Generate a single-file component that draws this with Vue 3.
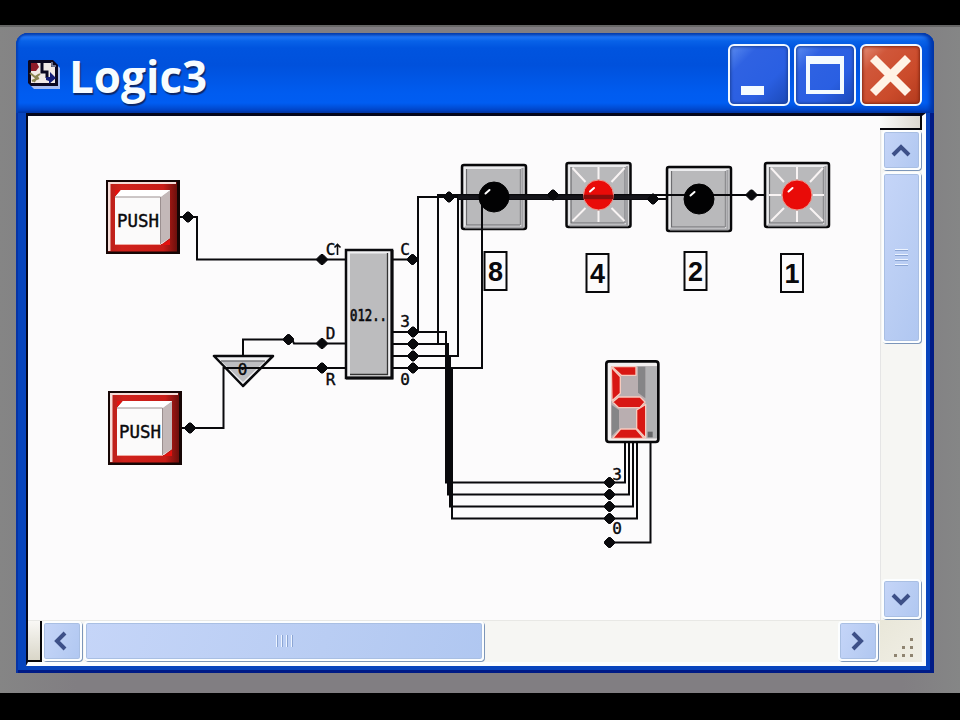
<template>
  <div class="screen">
    <div class="window">
      <header class="title-bar">
        <svg class="app-icon" viewBox="0 0 33 30">
          <path d="M3 2H26L32 8V29H6L3 26Z" fill="#a9bdf0" />
          <path d="M1 0H25L30 5V26H3L0 23V1Z" fill="#0b0720" />
          <path d="M3 3H23V7H27V23H3Z" fill="#f1e9e6" />
          <path d="M3 3H9L11 7L8 11H3Z" fill="#8d1c28" />
          <path d="M2 13L7 17L12 14M4 21L11 18M6 22L10 15" stroke="#8a8450" stroke-width="2" fill="none" />
          <path d="M14 3V12H19V18" stroke="#0b0720" stroke-width="3" fill="none" />
          <path d="M18 20L18 17L22 17L22 12L28 18L21 24V21Z" fill="#141c78" />
          <path d="M24 2V6H28" stroke="#8d93a8" stroke-width="1.5" fill="none" />
        </svg>
        <h1 class="title">Logic3</h1>
        <div class="controls">
          <button class="control">
            <svg viewBox="0 0 62 62"><rect x="13" y="42" width="23" height="9" fill="#f4fbff" /></svg>
          </button>
          <button class="control">
            <svg viewBox="0 0 62 62">
              <path d="M12 12H50V50H12ZM16 20V46H46V20Z" fill="#f4fbff" fill-rule="evenodd" />
            </svg>
          </button>
          <button class="control close">
            <svg viewBox="0 0 62 62">
              <path d="M13 14L48 49M48 14L13 49" stroke="#fff3e6" stroke-width="8.5" />
            </svg>
          </button>
        </div>
      </header>

      <main class="client">
        <svg class="circuit" viewBox="28 116 852 504">
          <defs>
            <linearGradient id="frame" x1="0" y1="0" x2="1" y2="0">
              <stop offset="0" stop-color="#b81f19" />
              <stop offset="0.2" stop-color="#d0221c" />
              <stop offset="0.8" stop-color="#c81c17" />
              <stop offset="1" stop-color="#6d100d" />
            </linearGradient>
          </defs>

          <!-- push buttons -->
          <g v-for="(b, i) in pushButtons" :key="'push' + i" :transform="`translate(${b.x} ${b.y})`">
            <rect width="74" height="74" fill="#160605" />
            <rect x="2" y="2" width="69" height="69.500" fill="url(#frame)" />
            <path d="M2 2H70V4H4.500V71H2Z" fill="#f6dcd8" />
            <path d="M9 17L15 10H64V58L56 64H9Z" fill="#fbfafa" />
            <path d="M54.500 17L64 10V58L54.500 64Z" fill="#c3b8b8" />
            <path d="M9 17L15 10H64L54.500 17Z" fill="#fff" />
            <path d="M9 17H54.500V64" fill="none" stroke="#9b8f8f" stroke-width="1" />
            <path d="M9 64.500H55" stroke="#f0a8a0" stroke-width="1" />
            <path d="M9 10H14L9 16ZM64 59V65H56Z" fill="#e3120f" />
            <text x="11" y="47" class="label" textLength="42" lengthAdjust="spacingAndGlyphs">PUSH</text>
          </g>

          <!-- clock gate -->
          <path d="M214 356H273L243 386Z" fill="#f1f1f3" stroke="#0a0a0d" stroke-width="2.5" stroke-linejoin="round" />
          <path d="M221 361H265L243 382Z" fill="#bdbdc1" />
          <path d="M221 361H265" stroke="#77777b" stroke-width="1.5" />

          <!-- counter chip -->
          <rect x="346" y="250" width="46" height="128" fill="#f0f0f2" stroke="#0a0a0d" stroke-width="2.5" />
          <rect x="350" y="253.500" width="38" height="121" fill="#bcbcbe" />
          <path d="M387.500 253V374.500H350" fill="none" stroke="#333" stroke-width="1.3" />
          <path d="M392 250V378H346" fill="none" stroke="#0a0a0d" stroke-width="3" />

          <!-- lamps -->
          <g v-for="lamp in lamps" :key="lamp.value" :transform="`translate(${lamp.x} ${lamp.y})`">
            <rect x="-32" y="-32" width="64" height="64" rx="2" fill="#d9d9db" stroke="#08080a" stroke-width="2.5" />
            <path d="M-30 -30H30L26 -28H-28V28L-30 30Z" fill="#ececee" />
            <rect x="-27.500" y="-28" width="54" height="56" fill="#b9b9bb" />
            <path d="M-27.500 -28V28H26" fill="none" stroke="#6d6d70" stroke-width="1.200" />
            <path d="M26.500 -28V28" fill="none" stroke="#8d8d90" stroke-width="1.500" />
            <path d="M28.500 -29V30.500H-29" fill="none" stroke="#a2a2a5" stroke-width="2" />
            <path v-if="lamp.on" d="M-26 -27L-13 -13M0 -28V-16M26 -27L13 -13M-28 0H-16M16 0H27M-26 26L-13 13M0 16V27M26 26L13 13" stroke="#f8f3f3" stroke-width="2" />
          </g>

          <!-- seven segment display -->
          <g transform="translate(590 350) scale(0.33333)">
            <rect x="49" y="34" width="156" height="242" rx="8" fill="#f2f0f0" stroke="#08080a" stroke-width="8" />
            <rect x="63" y="49" width="138" height="216" fill="#b9aeb0" />
            <path d="M140 49H201V265H166V60H140Z" fill="#b2b2b4" />
            <path d="M144 50H166V145L144 128Z" fill="#858587" />
            <path d="M65 165L87 180V236L65 258Z" fill="#858587" />
            <rect x="173" y="245" width="15" height="17" fill="#68686a" />
            <g fill="#d81713" stroke="#f8cabe" stroke-width="4" stroke-linejoin="round">
              <path d="M66 50H138V76H94Z" />
              <path d="M64 52L91 80V130L66 152Z" />
              <path d="M68 156L86 141H150L165 156L150 173H86Z" />
              <path d="M167 163V264L140 235V180Z" />
              <path d="M68 265L92 237H138L162 265Z" />
            </g>
          </g>

          <!-- wires -->
          <path v-for="(d, i) in wires" :key="'wire' + i" :d="d" class="wire" />
          <path d="M458 197.200H653" class="bus" />
          <path v-for="([x, y], i) in nodes" :key="'node' + i" :d="`M${x - 1} ${y - 5}H${x + 1}L${x + 5} ${y - 1}V${y + 1}L${x + 1} ${y + 5}H${x - 1}L${x - 5} ${y + 1}V${y - 1}Z`" class="node" />

          <!-- bulbs sit over the wires -->
          <g v-for="lamp in lamps" :key="'bulb' + lamp.value" :transform="`translate(${lamp.x} ${lamp.y})`">
            <circle r="15" :fill="lamp.on ? '#e90b08' : '#020203'" :stroke="lamp.on ? '#ee9a90' : '#020203'" stroke-width="1" />
            <path v-if="lamp.value === 4" d="M-15 2H15" stroke="#8c0d0c" stroke-width="4.500" />
            <path d="M-8.500 -3.500L-4.500 -7" fill="none" stroke="#fff" stroke-width="2" stroke-linecap="round" />
          </g>

          <!-- value boxes -->
          <g v-for="box in valueBoxes" :key="'box' + box.value">
            <rect :x="box.x" :y="box.y" width="22" height="38" fill="#fcfbfc" stroke="#08080a" stroke-width="2" />
            <text :x="box.x + 11" :y="box.y + 29" class="value">{{ box.value }}</text>
          </g>

          <text v-for="(p, i) in pinLabels" :key="'pin' + i" :x="p.x" :y="p.y" class="label pin">{{ p.text }}</text>
          <path d="M337.500 255V245M334.500 247.500L337.500 244.500L340.500 247.500" class="wire rise" />
          <text x="350" y="320.500" class="label chip" textLength="37" lengthAdjust="spacingAndGlyphs">012..</text>
        </svg>

        <div class="scroll-v">
          <div class="gap-top"></div>
          <button class="arrow">
            <svg viewBox="0 0 38 38"><path d="M11 24L19 16L27 24" /></svg>
          </button>
          <div class="thumb thumb-v"><i v-for="n in 4" :key="n"></i></div>
          <div class="track"></div>
          <button class="arrow">
            <svg viewBox="0 0 38 38"><path d="M11 15L19 23L27 15" /></svg>
          </button>
        </div>

        <div class="scroll-h">
          <div class="gap-left"></div>
          <button class="arrow">
            <svg viewBox="0 0 38 38"><path d="M23 11L15 19L23 27" /></svg>
          </button>
          <div class="thumb thumb-h"><i v-for="n in 4" :key="n"></i></div>
          <div class="track"></div>
          <button class="arrow">
            <svg viewBox="0 0 38 38"><path d="M15 11L23 19L15 27" /></svg>
          </button>
        </div>

        <svg class="grip" viewBox="880 620 42 42">
          <rect v-for="([x, y], i) in gripDots" :key="i" :x="x" :y="y" width="3" height="3" />
        </svg>
      </main>
    </div>
  </div>
</template>

<script setup>
const pushButtons = [
  { x: 106, y: 180 },
  { x: 108, y: 391 }
]

const lamps = [
  { value: 8, x: 494, y: 197, on: false },
  { value: 4, x: 598.5, y: 195, on: true },
  { value: 2, x: 699, y: 199, on: false },
  { value: 1, x: 797, y: 195, on: true }
]

const valueBoxes = [
  { value: 8, x: 484.5, y: 252 },
  { value: 4, x: 586.5, y: 254 },
  { value: 2, x: 684.5, y: 252 },
  { value: 1, x: 781, y: 254 }
]

const wires = [
  // inputs
  'M180 217H197V259.500H345',
  'M182 428H223.500V368H345',
  'M243 356V339.500H292L294 343.500H345',
  // counter to lamps
  'M393 259.500H418',
  'M393 332H418V197H462',
  'M393 344H438V195H566',
  'M393 356H458V199H667',
  'M393 368H482V195H765',
  // counter to display
  'M418 332H446V482.500H625V443',
  'M438 344H448V494.500H629V443',
  'M448 356H450V506.500H633V443',
  'M450 368H452V518.500H637V443',
  'M609 542.500H650.500V443'
]

const nodes = [
  [188, 217], [190, 428], [288.5, 339.5],
  [322, 259.5], [322, 343.5], [322, 368],
  [412.5, 259.5], [413, 332], [413, 344], [413, 356], [413, 368],
  [449, 197], [553, 195], [653, 199], [751.5, 195],
  [609.5, 482.5], [609.5, 494.5], [609.5, 506.5], [609.5, 518.5], [609.5, 542.5]
]

const pinLabels = [
  { text: 'C', x: 330.5, y: 255 },
  { text: 'C', x: 405, y: 255 },
  { text: '3', x: 405, y: 327 },
  { text: 'D', x: 330.5, y: 339 },
  { text: 'R', x: 330.5, y: 385 },
  { text: '0', x: 405, y: 385 },
  { text: '0', x: 242.5, y: 375 },
  { text: '3', x: 617, y: 480 },
  { text: '0', x: 617, y: 534 }
]

const gripDots = [
  [910, 638], [902, 646], [910, 646], [894, 654], [902, 654], [910, 654]
]
</script>

<style>
body {
  background: #000;
}
</style>

<style scoped>
.screen {
  box-sizing: border-box;
  width: 960px;
  height: 720px;
  padding: 8px 26px 20px 16px;
  border-top: 25px solid #000;
  border-bottom: 27px solid #000;
  background: linear-gradient(90deg, #858585, #817e82 8%, #817e82 94%, #858686);
  box-shadow: inset 0 2px #666;
}

.window {
  box-sizing: border-box;
  width: 918px;
  height: 640px;
  padding: 0 8px 7px 10px;
  border-radius: 12px 12px 0 0;
  background: #0744bd;
  box-shadow: inset 2px 0 #0733a5, inset -4px 0 #001b86, inset 0 -3px #001b86;
}

.title-bar {
  display: flex;
  box-sizing: border-box;
  height: 80px;
  margin: 0 -8px 0 -10px;
  padding: 11px 12px 0;
  border-radius: 12px 12px 0 0;
  background: linear-gradient(#063eac 0, #1f74f4 4px, #0862e8 8px, #0054df 15px, #0051dc 32px, #005cf0 60px, #005df2 70px, #0043c4 78px, #002f91 80px);
  box-shadow: inset 2px 0 2px #0640b5, inset -4px 0 4px #0134a5;
}

.app-icon {
  width: 33px;
  height: 30px;
  margin-top: 16px;
}

.title {
  margin: -1px 0 0 8px;
  color: #f6fcff;
  font: bold 44px/66px "Open Sans", sans-serif;
  letter-spacing: 0;
  text-shadow: 1px 2px 1px #0b2769;
}

.controls {
  display: flex;
  gap: 4px;
  margin-left: auto;
}

.control {
  box-sizing: border-box;
  width: 62px;
  height: 62px;
  padding: 0;
  border: 2px solid #f1f8ff;
  border-radius: 6px;
  background: linear-gradient(135deg, #5c8df0, #2f62e2 25%, #2a5fe2 65%, #1b49b8);
  box-shadow: inset 0 0 3px 1px #1b429c;
}

.control svg {
  display: block;
  width: 62px;
  height: 62px;
  margin: -2px;
}

.close {
  background: linear-gradient(135deg, #e38e77, #d0573a 25%, #cb4b2b 65%, #b23a1d);
  box-shadow: inset 0 0 3px 1px #842712;
}

.client {
  display: grid;
  grid-template: 504px 42px / 852px 42px;
  border: solid;
  border-width: 3px 4px 4px 2px;
  border-color: #05071c #fafdff #fafdff #05071c;
  background: #fcfbfc;
}

.circuit {
  width: 852px;
  height: 504px;
}

.wire {
  fill: none;
  stroke: #09090c;
  stroke-width: 2;
}

.rise {
  stroke-width: 1.6;
}

.bus {
  stroke: #15151a;
  stroke-width: 4;
}

.node {
  fill: #09090c;
  stroke: #09090c;
  stroke-linejoin: round;
}

.label {
  fill: #09090c;
  font: 17px "DejaVu Sans Mono", monospace;
  stroke: #09090c;
  stroke-width: 0.4px;
}

.pin {
  font-size: 16px;
  text-anchor: middle;
}

.chip {
  font-size: 15px;
  stroke-width: 0.6px;
}

.value {
  fill: #09090c;
  font: bold 27px "Liberation Sans", sans-serif;
  text-anchor: middle;
}

.scroll-v,
.scroll-h {
  display: flex;
  background: #f6f6f3;
}

.scroll-v {
  flex-direction: column;
  padding-left: 1px;
  border-left: 1px solid #e5e5e5;
}

.scroll-h {
  border-top: 1px solid #e8e8e5;
}

.gap-top {
  box-sizing: border-box;
  height: 14px;
  margin-left: -2px;
  border: solid #07070a;
  border-width: 0 2px 2px 0;
  background: linear-gradient(90deg, #fafaf8, #ddd9d0);
}

.gap-left {
  box-sizing: border-box;
  width: 14px;
  border: solid #07070a;
  border-width: 0 2px 2px 0;
  background: linear-gradient(#f9f8f5, #d9d6c8);
}

.arrow,
.thumb {
  box-sizing: border-box;
  flex: none;
  border: 2px solid #fcfeff;
  border-radius: 4px;
  background: linear-gradient(110deg, #c5d5f8, #b9cdf3 60%, #b0c7f1);
  box-shadow: 1px 1px #7c96b9, inset 0 0 0 1px #a9bfe3;
}

.arrow {
  width: 39px;
  height: 40px;
  padding: 0;
}

.arrow svg {
  display: block;
  width: 38px;
  height: 38px;
  margin: -1px -2px;
}

.arrow path {
  fill: none;
  stroke: #3d5088;
  stroke-width: 4;
}

.thumb {
  display: flex;
  align-items: center;
  justify-content: center;
  gap: 3px;
}

.thumb-v {
  flex-direction: column;
  width: 39px;
  height: 171px;
  margin-top: 2px;
}

.thumb-v i {
  width: 13px;
  height: 1px;
  border-top: 1px solid #edf4ff;
  background: #8ca6d4;
}

.thumb-h {
  width: 400px;
  height: 40px;
  margin-left: 2px;
}

.thumb-h i {
  width: 1px;
  height: 12px;
  border-left: 1px solid #edf4ff;
  background: #8ca6d4;
}

.track {
  flex: 1;
}

.scroll-h .arrow {
  width: 40px;
}

.scroll-h .arrow:last-child {
  margin-right: 2px;
}

.scroll-v .arrow:last-child {
  margin-bottom: 1px;
}

.grip {
  width: 42px;
  height: 42px;
  background: linear-gradient(135deg, #e9e7d9, #f0eee5);
  fill: #8f8471;
}
</style>
